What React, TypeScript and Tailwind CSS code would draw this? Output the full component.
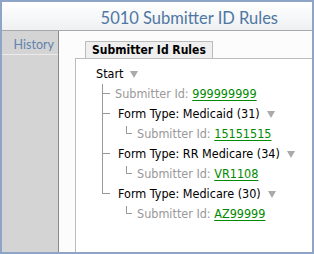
import React from "react";

const treeFont = {
  fontFamily: '"DejaVu Sans Condensed", "DejaVu Sans", sans-serif',
};

function Caret() {
  return (
    <span className="ml-[7px] inline-block h-0 w-0 border-x-[4px] border-t-[7px] border-x-transparent border-t-[#aaaaaa]" />
  );
}

function IdValue({ value }: { value: string }) {
  return <span className="text-[#008a00] underline underline-offset-[2px]">{value}</span>;
}

// ├ or └ connector in the main column
function Branch({ last }: { last?: boolean }) {
  return (
    <div className="flex h-full w-[8px] flex-col">
      <div className="h-1/2 border-b border-l border-[#9a9a9a]" />
      <div className={last ? "h-1/2" : "h-1/2 border-l border-[#9a9a9a]"} />
    </div>
  );
}

function Pass({ on }: { on: boolean }) {
  return <div className={on ? "h-full w-[8px] border-l border-[#9a9a9a]" : "h-full w-[8px]"} />;
}

function SubRow({ value, passMain }: { value: string; passMain: boolean }) {
  return (
    <div className="flex h-[20px] items-center">
      <Pass on={passMain} />
      <div className="ml-[16px] flex h-full w-[6px] flex-col">
        <div className="mt-[2px] h-[8px] border-b border-l border-[#9a9a9a]" />
      </div>
      <span className="ml-[5px] text-[#999999]">
        Submitter Id: <IdValue value={value} />
      </span>
    </div>
  );
}

function FormRow({ label, last }: { label: string; last?: boolean }) {
  return (
    <div className="flex h-[20px] items-center">
      <Branch last={last} />
      <span className="ml-[8px] flex items-center text-black">
        {label}
        <Caret />
      </span>
    </div>
  );
}

export default function App() {
  return (
    <div className="flex h-[254px] w-[314px] flex-col border-2 border-[#8ea5c8] bg-[#fcfcfc]">
      <div className="flex h-[29px] items-end justify-end border-b border-[#a8a8a8] bg-gradient-to-b from-white to-[#eef0f2] pb-[1px] pr-[34px]">
        <h1
          className="text-[16.5px] leading-[22px] text-[#4f77a3]"
          style={{ fontFamily: 'Lato, "Open Sans", sans-serif' }}
        >
          5010 Submitter ID Rules
        </h1>
      </div>
      <div className="flex min-h-0 flex-1">
        <div className="w-[57px] shrink-0 border-r border-[#8a8a8a] bg-[#d4d4d4]">
          <div
            className="border-b border-[#ebebeb] pr-[4px] pt-[7px] pb-[2px] text-right text-[12.5px] leading-[14px] text-[#5f83b0]"
            style={{ fontFamily: 'Lato, "Open Sans", sans-serif' }}
          >
            History
          </div>
        </div>
        <div className="flex min-w-0 flex-1 flex-col pl-[16px] pt-[10px]">
          <div className="flex pl-[10px]">
            <div
              className="border border-b-0 border-[#bcbcbc] bg-[#efefef] px-[6px] pt-[1px] text-[12px] font-bold leading-[15px] text-black"
              style={treeFont}
            >
              Submitter Id Rules
            </div>
          </div>
          <div
            className="flex-1 border-l border-t border-[#bcbcbc] bg-white pl-[20px] pt-[5px] text-[12.5px] leading-[20px]"
            style={treeFont}
          >
            <div className="flex h-[20px] items-center text-black">
              Start
              <Caret />
            </div>
            <div className="pl-[6px]">
              <div className="flex h-[20px] items-center">
                <Branch />
                <span className="ml-[5px] text-[#999999]">
                  Submitter Id: <IdValue value="999999999" />
                </span>
              </div>
              <FormRow label="Form Type: Medicaid (31)" />
              <SubRow value="15151515" passMain />
              <FormRow label="Form Type: RR Medicare (34)" />
              <SubRow value="VR1108" passMain />
              <FormRow label="Form Type: Medicare (30)" last />
              <SubRow value="AZ99999" passMain={false} />
            </div>
          </div>
        </div>
      </div>
    </div>
  );
}
